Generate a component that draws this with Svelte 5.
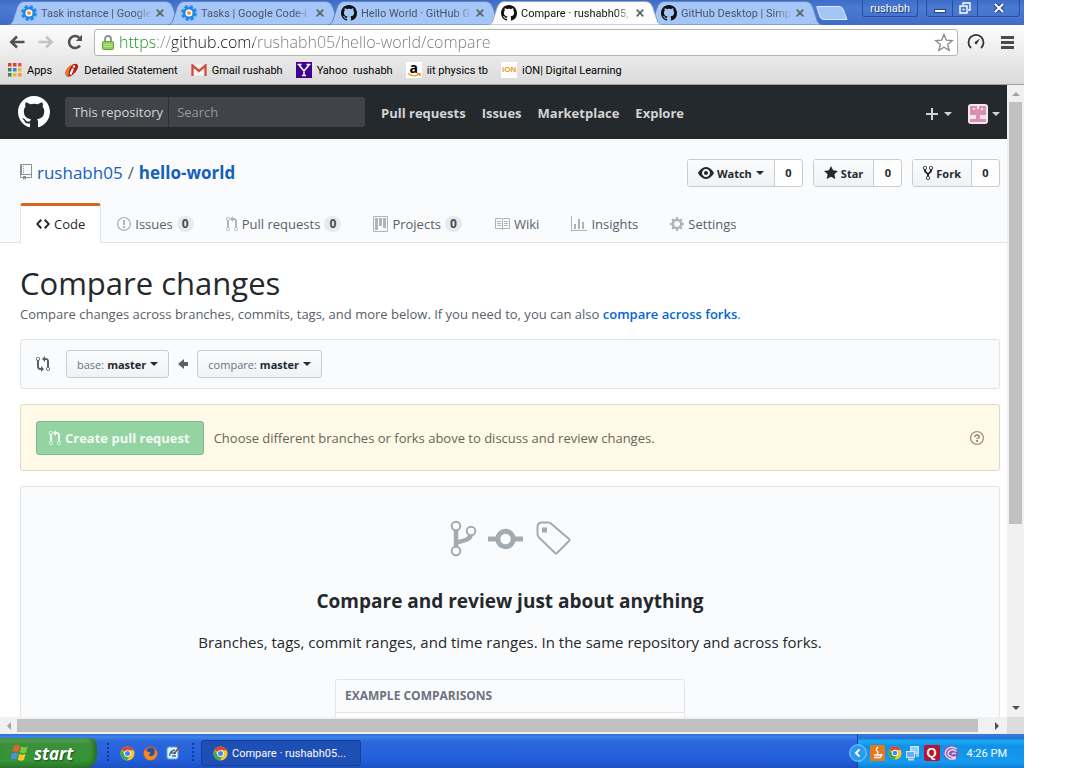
<script>
  const circle = 'M7 2.3c3.14 0 5.7 2.56 5.7 5.7s-2.56 5.7-5.7 5.7A5.71 5.71 0 0 1 1.3 8c0-3.14 2.56-5.7 5.7-5.7zM7 1C3.14 1 0 4.14 0 8s3.14 7 7 7 7-3.14 7-7-3.14-7-7-7z';
  const icons = {
    mark: [16, 'M8 0C3.58 0 0 3.58 0 8c0 3.54 2.29 6.53 5.47 7.59.4.07.55-.17.55-.38 0-.19-.01-.82-.01-1.49-2.01.37-2.53-.49-2.69-.94-.09-.23-.48-.94-.82-1.13-.28-.15-.68-.52-.01-.53.63-.01 1.08.58 1.23.82.72 1.21 1.87.87 2.33.66.07-.52.28-.87.51-1.07-1.78-.2-3.64-.89-3.64-3.95 0-.87.31-1.59.82-2.15-.08-.2-.36-1.02.08-2.12 0 0 .67-.21 2.2.82.64-.18 1.32-.27 2-.27.68 0 1.36.09 2 .27 1.53-1.04 2.2-.82 2.2-.82.44 1.1.16 1.92.08 2.12.51.56.82 1.27.82 2.15 0 3.07-1.87 3.75-3.65 3.95.29.25.54.73.54 1.48 0 1.07-.01 1.93-.01 2.2 0 .21.15.46.55.38A8.013 8.013 0 0 0 16 8c0-4.42-3.58-8-8-8z'],
    repo: [12, 'M4 9H3V8h1v1zm0-3H3v1h1V6zm0-2H3v1h1V4zm0-2H3v1h1V2zm8-1v12c0 .55-.45 1-1 1H6v2l-1.5-1.5L3 16v-2H1c-.55 0-1-.45-1-1V1c0-.55.45-1 1-1h10c.55 0 1 .45 1 1zm-1 10H1v2h2v-1h3v1h5v-2zm0-10H2v9h9V1z'],
    code: [14, 'M9.5 3L8 4.5 11.5 8 8 11.5 9.5 13 14 8 9.5 3zm-5 0L0 8l4.5 5L6 11.5 2.5 8 6 4.5 4.5 3z'],
    issue: [14, circle + 'M8 4H6v5h2V4zm0 6H6v2h2v-2z'],
    pull: [12, 'M11 11.28V5c-.03-.78-.34-1.47-.94-2.06C9.46 2.35 8.78 2.03 8 2H7V0L4 3l3 3V4h1c.27.02.48.11.69.31.21.2.3.42.31.69v6.28A1.993 1.993 0 0 0 10 15a1.993 1.993 0 0 0 1-3.72zm-1 2.92c-.66 0-1.2-.55-1.2-1.2 0-.65.55-1.2 1.2-1.2.65 0 1.2.55 1.2 1.2 0 .65-.55 1.2-1.2 1.2zM4 3c0-1.11-.89-2-2-2a1.993 1.993 0 0 0-1 3.72v6.56A1.993 1.993 0 0 0 2 15a1.993 1.993 0 0 0 1-3.72V4.72c.59-.34 1-.98 1-1.72zm-.8 10c0 .66-.55 1.2-1.2 1.2-.65 0-1.2-.55-1.2-1.2 0-.65.55-1.2 1.2-1.2.65 0 1.2.55 1.2 1.2zM2 4.2C1.34 4.2.8 3.65.8 3c0-.65.55-1.2 1.2-1.2.65 0 1.2.55 1.2 1.2 0 .65-.55 1.2-1.2 1.2z'],
    project: [15, 'M10 12h3V2h-3v10zm-4-2h3V2H6v8zm-4 4h3V2H2v12zm-1 1h13V1H1v14zM14 0H1a1 1 0 0 0-1 1v14a1 1 0 0 0 1 1h13a1 1 0 0 0 1-1V1a1 1 0 0 0-1-1z'],
    book: [16, 'M3 5h4v1H3V5zm0 3h4V7H3v1zm0 2h4V9H3v1zm11-5h-4v1h4V5zm0 2h-4v1h4V7zm0 2h-4v1h4V9zm2-6v9c0 .55-.45 1-1 1H9.5l-1 1-1-1H2c-.55 0-1-.45-1-1V3c0-.55.45-1 1-1h5.5l1 1 1-1H15c.55 0 1 .45 1 1zm-8 .5L7.5 3H2v9h6V3.5zm7-.5H9.5l-.5.5V12h6V3z'],
    graph: [16, 'M16 14v1H0V0h1v14h15zM5 13H3V8h2v5zm4 0H7V3h2v10zm4 0h-2V6h2v7z'],
    gear: [14, 'M14 8.77v-1.6l-1.94-.64-.45-1.09.88-1.84-1.13-1.13-1.81.91-1.09-.45-.69-1.92h-1.6l-.63 1.94-1.11.45-1.84-.88-1.13 1.13.91 1.81-.45 1.09L0 7.23v1.59l1.94.64.45 1.09-.88 1.84 1.13 1.13 1.81-.91 1.09.45.69 1.92h1.59l.63-1.94 1.11-.45 1.84.88 1.13-1.13-.92-1.81.47-1.09L14 8.75v.02zM7 11c-1.66 0-3-1.34-3-3s1.34-3 3-3 3 1.34 3 3-1.34 3-3 3z'],
    eye: [16, 'M8.06 2C3 2 0 8 0 8s3 6 8.06 6C13 14 16 8 16 8s-3-6-7.94-6zM8 12c-2.2 0-4-1.78-4-4 0-2.2 1.8-4 4-4 2.22 0 4 1.8 4 4 0 2.22-1.78 4-4 4zm2-4c0 1.11-.89 2-2 2-1.11 0-2-.89-2-2 0-1.11.89-2 2-2 1.11 0 2 .89 2 2z'],
    star: [14, 'M14 6l-4.9-.64L7 1 4.9 5.36 0 6l3.6 3.26L2.67 14 7 11.67 11.33 14l-.93-4.74z'],
    fork: [10, 'M8 1a1.993 1.993 0 0 0-1 3.72V6L5 8 3 6V4.72A1.993 1.993 0 0 0 2 1a1.993 1.993 0 0 0-1 3.72V6.5l3 3v1.78A1.993 1.993 0 0 0 5 15a1.993 1.993 0 0 0 1-3.72V9.5l3-3V4.72A1.993 1.993 0 0 0 8 1zM2 4.2C1.34 4.2.8 3.65.8 3c0-.65.55-1.2 1.2-1.2.65 0 1.2.55 1.2 1.2 0 .65-.55 1.2-1.2 1.2zm3 10c-.66 0-1.2-.55-1.2-1.2 0-.65.55-1.2 1.2-1.2.65 0 1.2.55 1.2 1.2 0 .65-.55 1.2-1.2 1.2zm3-10c-.66 0-1.2-.55-1.2-1.2 0-.65.55-1.2 1.2-1.2.65 0 1.2.55 1.2 1.2 0 .65-.55 1.2-1.2 1.2z'],
    compare: [14, 'M5 12H4c-.27-.02-.48-.11-.69-.31-.21-.2-.3-.42-.31-.69V4.72A1.993 1.993 0 0 0 2 1a1.993 1.993 0 0 0-1 3.72V11c.03.78.34 1.47.94 2.06.6.59 1.28.91 2.06.94h1v2l3-3-3-3v2zM2 1.8c.66 0 1.2.55 1.2 1.2 0 .65-.55 1.2-1.2 1.2C1.35 4.2.8 3.65.8 3c0-.65.55-1.2 1.2-1.2zm11 9.48V5c-.03-.78-.34-1.47-.94-2.06-.6-.59-1.28-.91-2.06-.94H9V0L6 3l3 3V4h1c.27.02.48.11.69.31.21.2.3.42.31.69v6.28A1.993 1.993 0 0 0 12 15a1.993 1.993 0 0 0 1-3.72zm-1 2.92c-.66 0-1.2-.55-1.2-1.2 0-.65.55-1.2 1.2-1.2.65 0 1.2.55 1.2 1.2 0 .65-.55 1.2-1.2 1.2z'],
    left: [10, 'M6 3L0 8l6 5v-3h4V6H6z'],
    question: [14, circle + 'M6 10h2v2H6v-2zm4-3.5C10 8.64 8 9 8 9H6c0-.55.45-1 1-1h.5c.28 0 .5-.22.5-.5v-1c0-.28-.22-.5-.5-.5h-1c-.28 0-.5.22-.5.5V7H4c0-1.5 1.5-3 3-3s3 1 3 2.5z']
  };

  const browserTabs = [
    { title: 'Task instance | Google', icon: 'gci' },
    { title: 'Tasks | Google Code-i', icon: 'gci' },
    { title: 'Hello World · GitHub G', icon: 'github' },
    { title: 'Compare · rushabh05,', icon: 'github', active: true },
    { title: 'GitHub Desktop | Simp', icon: 'github' }
  ];
  const bookmarks = [
    { label: 'Apps', icon: 'apps' },
    { label: 'Detailed Statement', icon: 'icici' },
    { label: 'Gmail rushabh', icon: 'gmail' },
    { label: 'Yahoo  rushabh', icon: 'yahoo' },
    { label: 'iit physics tb', icon: 'amazon' },
    { label: 'iON| Digital Learning', icon: 'ion' }
  ];
  const dots = ['#d64533', '#d64533', '#e2574c', '#3b8a4b', '#3f7de0', '#efb52c', '#3b8a4b', '#efb52c', '#efa02c'];
  const nav = ['Pull requests', 'Issues', 'Marketplace', 'Explore'];
  const actions = [
    { label: 'Watch', icon: 'eye', caret: true },
    { label: 'Star', icon: 'star' },
    { label: 'Fork', icon: 'fork' }
  ];
  const repoTabs = [
    { label: 'Code', icon: 'code', active: true },
    { label: 'Issues', icon: 'issue', count: 0 },
    { label: 'Pull requests', icon: 'pull', count: 0 },
    { label: 'Projects', icon: 'project', count: 0 },
    { label: 'Wiki', icon: 'book' },
    { label: 'Insights', icon: 'graph' },
    { label: 'Settings', icon: 'gear' }
  ];
  let url = $state('https://github.com/rushabh05/hello-world/compare');
  let query = $state('');
</script>

{#snippet octicon(name, height = 16)}
  <svg class="oct" viewBox="0 0 {icons[name][0]} 16" width={(icons[name][0] * height) / 16} {height} fill="currentColor" fill-rule="evenodd" aria-hidden="true"><path d={icons[name][1]} /></svg>
{/snippet}

{#snippet chromeLogo(size)}
  <svg width={size} height={size} viewBox="0 0 16 16" aria-hidden="true">
    <circle cx="8" cy="8" r="7.5" fill="#f7c52e" />
    <path d="M8 8L1.5 4.3A7.5 7.5 0 0 1 14.6 4.5H8z" fill="#e0442f" />
    <path d="M1.5 4.3A7.5 7.5 0 0 0 7.2 15.5L10.6 10 8 8 5 9.5z" fill="#3aa757" />
    <circle cx="8" cy="8" r="3.6" fill="#fff" /><circle cx="8" cy="8" r="2.7" fill="#4485e8" />
  </svg>
{/snippet}

<div class="desktop">
  <div class="tabstrip">
    <div class="tabs">
      {#each browserTabs as tab}
        <div class="tab" class:active={tab.active}>
          <svg class="shape" viewBox="0 0 174 24" preserveAspectRatio="none" aria-hidden="true">
            <path d="M0 24C5 23 5 18 7 13C9 7 10 1 16 .5H158C164 1 165 7 167 13C169 18 169 23 174 24z" />
          </svg>
          {#if tab.icon === 'gci'}
            <svg width="16" height="16" viewBox="0 0 16 16" aria-hidden="true">
              <circle cx="8" cy="8" r="6.4" fill="none" stroke="#2389e5" stroke-width="3" stroke-dasharray="3.2 1.8" />
              <circle cx="8" cy="8" r="4.8" fill="#fff" stroke="#2389e5" stroke-width="2.6" /><circle cx="8" cy="8" r="2" fill="#ef9a1d" />
            </svg>
          {:else}
            {@render octicon('mark')}
          {/if}
          <button class="tab-title">{tab.title}</button>
          <button class="tab-close" aria-label="Close tab">
            <svg width="8" height="8" viewBox="0 0 8 8"><path d="M.7.7l6.6 6.6M7.3.7L.7 7.3" stroke="#566" stroke-width="1.7" /></svg>
          </button>
        </div>
      {/each}
      <button class="newtab" aria-label="New tab">
        <svg width="32" height="14" viewBox="0 0 32 14"><path d="M1 1.5Q0 .5 2 .5H23Q26 .5 27 3L31 13.5H8Q5 13.5 4 11z" fill="#a3c5f5" stroke="#dcebff" /></svg>
      </button>
    </div>
    <div class="controls">
      <button class="user">rushabh</button>
      <div class="win">
        <button aria-label="Minimize"><svg width="12" height="12"><rect x=".5" y="7.5" width="11" height="3" fill="#fff" stroke="#25448d" /></svg></button>
        <button aria-label="Restore"><svg width="12" height="12" fill="none" stroke="#fff" stroke-width="1.4"><path d="M4 3V1h7v7H9M1 4h7v7H1z" /><path d="M3.5 7.5h2" /></svg></button>
        <button class="close" aria-label="Close"><svg width="12" height="10"><path d="M2 1l8 8M10 1L2 9" stroke="#25448d" stroke-width="4" /><path d="M2 1l8 8M10 1L2 9" stroke="#fff" stroke-width="2" /></svg></button>
      </div>
    </div>
  </div>

  <div class="toolbar">
    <div class="address">
      <button aria-label="Back"><svg width="16" height="14" viewBox="0 0 16 14" fill="none" stroke="#505050" stroke-width="2.6"><path d="M15.500 7H2.500M8 1.500L2.300 7 8 12.500" /></svg></button>
      <button aria-label="Forward"><svg width="16" height="14" viewBox="0 0 16 14" fill="none" stroke="#c4c4c4" stroke-width="2.600"><path d="M.5 7H13.500M8 1.500L13.700 7 8 12.500" /></svg></button>
      <button aria-label="Reload"><svg width="16" height="16" viewBox="0 0 16 16"><path d="M13 11.500A6 6 0 1 1 12.300 3.800" fill="none" stroke="#505050" stroke-width="2.500" /><path d="M15 .8V7H8.800z" fill="#505050" /></svg></button>
      <div class="omnibox">
        <svg width="12" height="15" viewBox="0 0 12 15" aria-hidden="true"><path d="M3 7V4a3 3 0 0 1 6 0v3" fill="none" stroke="#8e8e8e" stroke-width="1.800" /><rect x=".5" y="6.500" width="11" height="8" rx="1" fill="#8fd05a" stroke="#5da632" /><path d="M1.500 9.500h9M1.500 11.500h9" stroke="#b7e58e" /></svg>
        <input class="url" aria-label="Address" bind:value={url} spellcheck="false" />
        <button aria-label="Bookmark this page"><svg width="20" height="19" viewBox="0 0 20 19"><path d="M10 1.500l2.300 5.600 6 .4-4.600 3.900 1.500 6L10 14.200l-5.200 3.200 1.500-6L1.700 7.500l6-.4z" fill="#fff" stroke="#888" stroke-width="1.300" /></svg></button>
      </div>
      <button aria-label="Page speed"><svg width="18" height="16" viewBox="0 0 18 16"><path d="M4 14A7.500 7.500 0 1 1 14 14" fill="none" stroke="#333" stroke-width="1.800" /><path d="M13 4.500L9.800 10a1.500 1.500 0 0 1-2-2z" fill="#333" /></svg></button>
      <button class="menu" aria-label="Menu"><svg width="13" height="13"><path d="M0 1.500h13M0 6.500h13M0 11.500h13" stroke="#4c4c4c" stroke-width="3" /></svg></button>
    </div>
    <div class="bookmarks">
      {#each bookmarks as mark}
        <a href="#{mark.icon}">
          {#if mark.icon === 'apps'}
            <svg width="14" height="14" viewBox="0 0 14 14">{#each dots as fill, i}<rect x={(i % 3) * 5} y={Math.floor(i / 3) * 5} width="3.500" height="3.500" {fill} />{/each}</svg>
          {:else if mark.icon === 'icici'}
            <svg width="14" height="14" viewBox="0 0 14 14"><path d="M1.500 13Q-1 10 2 6T10 .8Q14 1 12.800 5T7 12.500Q3.500 14.500 1.500 13z" fill="#b01c1c" /><path d="M.8 12C.5 8 3 3.500 8 1.300 5 4.500 3.500 8 3.500 13.300z" fill="#ef7a20" /><path d="M9.500 2.500L8.500 4.500M8 5.500L5.500 11.500" fill="none" stroke="#fff" stroke-width="2" /></svg>
          {:else if mark.icon === 'gmail'}
            <svg width="16" height="12" viewBox="0 0 16 12"><rect x="1" y=".5" width="14" height="11" fill="#f4f4f4" /><path d="M1.500 12V1.500L8 7l6.500-5.500V12" fill="none" stroke="#d54b3d" stroke-width="2.300" /></svg>
          {:else if mark.icon === 'yahoo'}
            <svg width="16" height="16" viewBox="0 0 16 16"><rect width="16" height="16" fill="#400090" /><path d="M3 3l5 6 5-6M8 8.500V14M1.500 2.500h4M10.500 2.500h4M6 13.500h4" fill="none" stroke="#fff" stroke-width="1.500" /></svg>
          {:else if mark.icon === 'amazon'}
            <span class="amazon"><b>a</b><svg width="14" height="4" viewBox="0 0 14 4"><path d="M1 .5Q7 5 12.500 1M10 .5h3v2.500" fill="none" stroke="#f39a1d" stroke-width="1.400" /></svg></span>
          {:else}
            <span class="ion">iON</span>
          {/if}
          <span class="mark-label">{mark.label}</span>
        </a>
      {/each}
    </div>
  </div>

  <div class="view">
    <div class="page">
      <header>
        <a class="logo" href="#home" aria-label="Homepage">{@render octicon('mark', 32)}</a>
        <form class="search">
          <label for="q">This repository</label>
          <input id="q" placeholder="Search" bind:value={query} />
        </form>
        <nav>{#each nav as item}<a href="#{item}">{item}</a>{/each}</nav>
        <div class="account">
          <button aria-label="Create new"><svg width="12" height="12"><path d="M6 0v12M0 6h12" stroke="currentColor" stroke-width="2" /></svg><i class="caret"></i></button>
          <button aria-label="View profile">
            <svg width="20" height="20" viewBox="0 0 20 20"><rect width="20" height="20" rx="3" fill="#f6e6ee" /><path fill-rule="evenodd" d="M2 2h7v3h2V2h7v9h-6v4h6v3H2v-3h6v-4H2zM5 4v2h2V4zM13 4v2h2V4z" fill="#dc8fb6" /></svg><i class="caret"></i>
          </button>
        </div>
      </header>

      <section class="repohead">
        <div class="title-row">
          <h1>{@render octicon('repo')}<a href="#owner">rushabh05</a><span>/</span><a class="strong" href="#repo">hello-world</a></h1>
          <div class="actions">
            {#each actions as action}
              <div class="social">
                <button>{@render octicon(action.icon)}{action.label}{#if action.caret}<i class="caret"></i>{/if}</button>
                <a href="#{action.label}">0</a>
              </div>
            {/each}
          </div>
        </div>
        <nav class="reponav">
          {#each repoTabs as tab}
            <a href="#{tab.label}" class:active={tab.active}>{@render octicon(tab.icon)}{tab.label}{#if tab.count !== undefined}<span class="counter">{tab.count}</span>{/if}</a>
          {/each}
        </nav>
      </section>

      <main>
        <h2>Compare changes</h2>
        <p class="sub">Compare changes across branches, commits, tags, and more below. If you need to, you can also <a href="#forks">compare across forks</a>.</p>
        <div class="range">
          {@render octicon('compare')}
          <button class="pick"><span>base:</span> master<i class="caret"></i></button>
          {@render octicon('left')}
          <button class="pick"><span>compare:</span> master<i class="caret"></i></button>
        </div>
        <div class="notice">
          <button class="create" disabled>{@render octicon('pull')}Create pull request</button>
          <p>Choose different branches or forks above to discuss and review changes.</p>
          <a href="#help" aria-label="Learn more">{@render octicon('question')}</a>
        </div>
        <div class="blank">
          <svg width="122" height="38" viewBox="0 0 122 38" fill="none" stroke="#a3aab1" aria-hidden="true">
            <path d="M7 10v18M7 25c0-4 15-1 15-11" stroke-width="4.500" />
            <g stroke-width="2" fill="#fafbfc"><circle cx="7" cy="7" r="4.300" /><circle cx="7" cy="32" r="4.300" /><circle cx="22" cy="12" r="4.300" /></g>
            <path d="M39 20h35" stroke-width="5" /><circle cx="56.500" cy="20" r="7.700" stroke-width="5" fill="#fafbfc" />
            <path d="M93 3.500h6q2 0 3.500 1.500L120 20q1 1 0 2L108 34q-1 1-2 0L90 18.500Q88.500 17 88.500 15V8q0-4.500 4.500-4.500z" stroke-width="2" />
            <rect x="93" y="8.500" width="5" height="5" fill="#a3aab1" stroke="none" />
          </svg>
          <h3>Compare and review just about anything</h3>
          <p>Branches, tags, commit ranges, and time ranges. In the same repository and across forks.</p>
          <div class="examples"><h4>EXAMPLE COMPARISONS</h4></div>
        </div>
      </main>
    </div>
    <div class="vbar"><i class="arr up"></i><div class="vthumb"></div><i class="arr down"></i></div>
  </div>
  <div class="hbar"><i class="arr prev"></i><div class="hthumb"></div><i class="arr next"></i><span class="corner"></span></div>

  <footer>
    <button class="start">
      <svg width="20" height="18" viewBox="0 0 20 18" aria-hidden="true"><path d="M4 2q3-2 6 0L8.500 8q-3-1.500-6 0z" fill="#ef5b2a" /><path d="M11 2.500q3 1.500 6.500 0L16 8.500q-3 1.500-6.200 0z" fill="#7ac943" /><path d="M2 9.500q3-1.500 6 0L6.500 15.500q-3-1.500-6 0z" fill="#4d8df0" /><path d="M9.200 10q3 1.500 6.300 0L14 16q-3 1.500-6.200 0z" fill="#fbc92b" /></svg>
      start
    </button>
    <span class="grip"></span>
    <div class="quick">
      <button aria-label="Chrome">{@render chromeLogo(15)}</button>
      <button aria-label="Firefox"><svg width="15" height="15" viewBox="0 0 16 16"><circle cx="8" cy="8" r="7.500" fill="#e66a1c" /><circle cx="8.500" cy="6.500" r="5" fill="#2b4f9e" /><path d="M1 5q2-1 4 1l3 1-2 3q3 2 6-1 1-3 0-6 4 4 2 8-3 4.500-7 4Q1 14 1 5z" fill="#f08a24" /></svg></button>
      <button aria-label="Show desktop"><svg width="15" height="16" viewBox="0 0 15 16"><rect x="1" y="2" width="11" height="12" rx="2" fill="#e8f4fd" stroke="#5aa3d8" /><path d="M4 11q-1-5 5-6M5 8h5M6 11h4" fill="none" stroke="#2b6cb0" stroke-width="1.300" /><path d="M8 9l6-8" stroke="#78523a" stroke-width="1.500" /></svg></button>
    </div>
    <span class="grip"></span>
    <button class="task">{@render chromeLogo(15)}Compare · rushabh05...</button>
    <div class="tray">
      <button class="expand" aria-label="Show hidden icons"><svg width="18" height="18" viewBox="0 0 18 18"><circle cx="9" cy="9" r="8.300" fill="#2a9af3" stroke="#8fd0ff" /><path d="M10.500 5.500L7 9l3.500 3.500" fill="none" stroke="#fff" stroke-width="2" /></svg></button>
      <svg width="15" height="16" viewBox="0 0 15 16" aria-hidden="true"><rect width="15" height="16" rx="1" fill="#e57a1d" /><path d="M8 2q-3 3-1 4t0 3M4 10h7M4 12.500h7M11 9.500q2 0 0 2" fill="none" stroke="#fff" stroke-width="1.300" /></svg>
      {@render chromeLogo(14)}
      <svg width="16" height="16" viewBox="0 0 16 16" aria-hidden="true"><rect x="5.500" y="1.500" width="8" height="7" fill="#8fd3f7" stroke="#d7e6f2" /><rect x="1.500" y="6.500" width="8" height="6" fill="#5fb2ef" stroke="#d7e6f2" /><path d="M3 14.500h6M11 10.500h3" stroke="#cfd6dd" stroke-width="2" /></svg>
      <span class="quick-heal">Q</span>
      <svg width="16" height="16" viewBox="0 0 16 16" aria-hidden="true"><circle cx="8" cy="8" r="7.500" fill="#8457b0" /><path d="M14 4Q7 0 3.500 5T6 13.500Q9 15 13 13M13.500 6.500Q9 3 6 6.500T9 12q2 1 4-.5M13 9q-3-2-4 .5" fill="none" stroke="#eadcf5" stroke-width="1.400" /></svg>
      <time>4:26 PM</time>
    </div>
  </footer>
</div>

<style>
  :global(body) { background: #fff; }
  .desktop { box-sizing: border-box; height: 100vh; padding-right: 56px; display: flex; flex-direction: column; overflow: hidden; font-family: "Open Sans", "Noto Sans", sans-serif; color: #24292e; }
  .desktop :global(*) { box-sizing: border-box; }
  button { font: inherit; color: inherit; border: 0; padding: 0; margin: 0; background: none; display: flex; align-items: center; flex: none; }
  a { text-decoration: none; color: inherit; }
  h1, h2, h3, h4, p { margin: 0; }
  svg { display: block; flex: none; }
  input { font: inherit; border: 0; padding: 0; background: none; outline: 0; min-width: 0; }
  .caret { border: 4px solid transparent; border-top-color: currentColor; border-bottom: 0; margin-left: 4px; }

  .tabstrip, .toolbar, footer { font-family: Roboto, "Liberation Sans", sans-serif; font-size: 11px; flex: none; }
  .tabstrip { height: 25px; display: flex; justify-content: space-between; background: linear-gradient(#3c6cc6, #4b7ad2 8px, #3f6cc8); }
  .tabs { display: flex; padding: 1px 0 0 8px; }
  .tab { position: relative; width: 174px; margin-right: -14px; padding: 0 18px 0 13px; display: flex; align-items: center; gap: 4px; color: #46566c; }
  .tab .shape { position: absolute; inset: 0; width: 100%; height: 100%; fill: #a5c6f6; stroke: #5d82bd; }
  .tab > :global(svg:not(.shape)) { position: relative; color: #111; }
  .tab.active { z-index: 1; color: #111; }
  .tab.active .shape { fill: #fdfdfd; stroke: #8ba6d0; }
  .tab-title { position: relative; flex: 1; min-width: 0; overflow: hidden; white-space: nowrap; mask-image: linear-gradient(90deg, #000 84%, transparent); }
  .tab-close { position: relative; }
  .newtab { align-self: center; margin-left: 8px; }
  .controls { display: flex; align-items: flex-start; gap: 8px; padding-right: 4px; color: #fff; }
  .user { height: 17px; padding: 0 7px; border: 1px solid #274d9f; border-top: 0; border-radius: 0 0 3px 3px; text-shadow: 1px 1px #1d3979; }
  .win { display: flex; border: 1px solid #274d9f; border-top: 0; border-radius: 0 0 3px 3px; box-shadow: 0 0 1px #9bbcf4; }
  .win button { width: 25px; height: 16px; justify-content: center; }
  .win button + button { border-left: 1px solid #274d9f; }
  .win .close { width: 42px; }

  .toolbar { height: 60px; display: flex; flex-direction: column; background: linear-gradient(#fdfdfd, #dadada); border-bottom: 1px solid #a0a0a0; }
  .address { display: flex; align-items: center; gap: 13px; height: 34px; padding: 0 10px 0 9px; }
  .omnibox { flex: 1; display: flex; align-items: center; gap: 5px; height: 27px; padding: 0 3px 0 7px; margin-left: -2px; background: #fff; border: 1px solid #b4b4a8; border-radius: 3px; }
  .url { flex: 1; height: 25px; font-family: "Open Sans", sans-serif; font-size: 16px; font-weight: 300; color: transparent; caret-color: #222; background: linear-gradient(90deg, #12941a 36px, #888 36px 53px, #111 53px 135px, #777 135px); background-clip: text; }
  .address > .omnibox + button { margin-left: -4px; }
  .menu { margin-left: 3px; }
  .bookmarks { display: flex; align-items: center; gap: 13px; height: 22px; padding-left: 8px; color: #000; }
  .bookmarks a { display: flex; align-items: center; gap: 5px; }
  .mark-label { white-space: pre; }
  .amazon { width: 16px; height: 16px; background: #fff; display: flex; flex-direction: column; align-items: center; }
  .amazon b { font: bold 14px/11px "Open Sans", sans-serif; }
  .ion { width: 16px; height: 16px; background: #fff; color: #ee9527; font: bold 8px/16px "Liberation Sans", sans-serif; text-align: center; }

  .view { flex: 1; min-height: 0; display: flex; }
  .page { flex: 1; min-width: 0; overflow: hidden; background: #fff; font-size: 13px; }
  header { height: 54px; display: flex; align-items: center; padding: 0 7px 0 18px; background: #24292e; color: #d3d4d5; }
  .logo { color: #fff; }
  .search { display: flex; align-items: center; width: 300px; height: 30px; margin: 0 16px 0 15px; background: #404448; border-radius: 3px; overflow: hidden; }
  .search label { padding: 0 5px 0 8px; line-height: 30px; border-right: 1px solid #2b3035; white-space: nowrap; }
  .search input { flex: 1; height: 30px; padding: 0 8px; color: #fff; }
  .search input::placeholder { color: #96989b; opacity: 1; }
  header nav { display: flex; gap: 16px; padding-top: 2px; font-weight: 700; }
  .account { display: flex; gap: 16px; margin-left: auto; padding-top: 3px; }
  .account .caret { margin-left: 6px; }
  .account button + button .caret { margin-left: 4px; }

  .repohead { background: #fafbfc; border-bottom: 1px solid #e1e4e8; padding: 20px 7px 0 20px; }
  .title-row { display: flex; justify-content: space-between; height: 28px; }
  h1 { display: flex; align-items: center; gap: 5px; height: 26px; font-size: 17px; font-weight: 400; color: #586069; }
  h1 :global(svg) { color: #8b9096; }
  h1 a, .sub a { color: #0366d6; }
  h1 a { color: #1460bd; }
  .strong { font-weight: 700; }
  .actions { display: flex; gap: 10px; }
  .social { display: flex; height: 28px; border: 1px solid #c9ccd0; border-radius: 3px; font-size: 11px; font-weight: 700; background: #fff; }
  .social button { gap: 3px; padding: 0 10px; background: linear-gradient(#fafbfc, #eff3f6); border-right: 1px solid #c9ccd0; }
  .social .caret { margin-left: 1px; }
  .social a { width: 27px; line-height: 26px; text-align: center; }
  .reponav { display: flex; margin-top: 16px; margin-bottom: -1px; }
  .reponav a { display: flex; align-items: center; gap: 4px; height: 40px; padding: 0 16px 2px; color: #586069; border-top: 3px solid transparent; white-space: nowrap; }
  .reponav a :global(svg) { color: #b0b4b8; }
  .reponav .active { background: #fff; color: #24292e; border: 1px solid #e1e4e8; border-top: 3px solid #d9641c; border-bottom: 0; border-radius: 3px 3px 0 0; padding: 0 15px 2px; }
  .reponav .active :global(svg) { color: #24292e; }
  .counter { min-width: 17px; padding: 0 5px; border-radius: 10px; background: #e9eaec; color: #444d56; font-size: 12px; font-weight: 700; line-height: 16px; text-align: center; }

  main { padding: 19px 7px 0 20px; }
  h2 { font-size: 31px; line-height: 42px; font-weight: 400; }
  .sub { line-height: 20px; color: #586069; white-space: nowrap; }
  .sub a { font-weight: 600; }
  .range { display: flex; align-items: center; gap: 9px; height: 50px; margin-top: 15px; padding: 0 15px; background: #fafbfc; border: 1px solid #e1e4e8; border-radius: 3px; color: #586069; }
  .range > .pick:nth-of-type(1) { margin-left: 7px; }
  .pick { gap: 3px; height: 28px; padding: 0 10px; border: 1px solid #c9ccd0; border-radius: 3px; background: linear-gradient(#fafbfc, #eff3f6); font-size: 11px; font-weight: 700; color: #24292e; }
  .pick span { font-weight: 400; color: #6a737d; }
  .pick .caret { margin-left: 1px; }
  .notice { display: flex; align-items: center; gap: 10px; height: 67px; margin: 15px 0; padding: 0 15px; background: #fff9e8; border: 1px solid #dfd8c2; border-radius: 3px; color: #68665a; }
  .notice a { margin-left: auto; color: #9d957c; }
  .create { gap: 4px; height: 34px; padding: 0 13px 0 12px; border: 1px solid #82bc8e; border-radius: 3px; background: #94d3a2; color: #f2faf3; font-weight: 700; }
  .blank { display: flex; flex-direction: column; align-items: center; padding-top: 32px; height: 400px; background: #fafbfc; border: 1px solid #e1e4e8; border-radius: 3px; }
  h3 { margin-top: 29px; font-size: 19px; line-height: 30px; }
  .blank p { margin-top: 14px; font-size: 15px; line-height: 24px; white-space: nowrap; }
  .examples { width: 350px; height: 100px; margin-top: 25px; border: 1px solid #e1e4e8; border-radius: 3px; background: #fff; }
  h4 { padding: 0 9px; font-size: 12px; line-height: 32px; border-bottom: 1px solid #e1e4e8; color: #6a737d; background: #fafbfc; }

  .vbar { width: 17px; flex: none; display: flex; flex-direction: column; align-items: center; background: #f1f1f1; }
  .vthumb { width: 13px; height: 422px; background: #c1c1c1; }
  .arr { flex: none; border: 4px solid transparent; }
  .up { margin: 3px 0 6px; border-bottom-color: #a3a3a3; }
  .down { margin: auto 0 3px; border-top-color: #505050; }
  .hbar { flex: none; display: flex; align-items: center; height: 17px; background: #f1f1f1; }
  .hthumb { flex: 1; height: 13px; background: #c1c1c1; }
  .prev { margin: 0 6px 0 3px; border-right-color: #a3a3a3; }
  .next { margin: 0 4px 0 17px; border-left-color: #505050; }
  .corner { width: 17px; height: 17px; background: #dcdcdc; }

  footer { height: 34px; display: flex; align-items: center; color: #fff; background: linear-gradient(#2f6fd8, #3c84ea 3px, #2b68de 7px, #245edb 26px, #1d50c0); }
  .start { align-self: flex-end; height: 30px; width: 97px; padding-left: 10px; gap: 4px; border-radius: 0 8px 12px 0; background: linear-gradient(#5fae5f, #3c8f3c 6px, #359535 22px, #2d7a2d); box-shadow: inset -3px 0 4px #2a6a2a; font: italic bold 17px "Open Sans", sans-serif; text-shadow: 1px 1px 2px #1d4d1d; }
  .grip { width: 4px; height: 20px; margin: 2px 0 0 9px; background: radial-gradient(circle, #153a9c 1px, transparent 1px) 0 0 / 4px 4px; }
  .quick { display: flex; gap: 8px; margin: 4px 1px 0 10px; }
  .task { gap: 4px; width: 160px; height: 26px; margin: 4px 0 0 6px; padding-left: 11px; background: #1d4fb5; border: 1px solid #173f98; border-radius: 3px; }
  .tray { position: relative; z-index: 0; display: flex; align-items: center; gap: 3px; margin-left: auto; height: 100%; padding: 4px 17px 0 0; }
  .tray::before { content: ""; position: absolute; z-index: -1; inset: 0 0 0 8px; border-left: 1px solid #0c3f9a; background: linear-gradient(#3579dc 2px, #2173d8 4px, #19aef4 7px, #1290e8 12px, #149bf0 28px, #0f7fd4); }
  .quick-heal { width: 16px; height: 16px; border-radius: 2px; background: #b7142e; font: bold 13px/16px "Liberation Sans", sans-serif; text-align: center; }
  time { margin-left: 5px; }
</style>
